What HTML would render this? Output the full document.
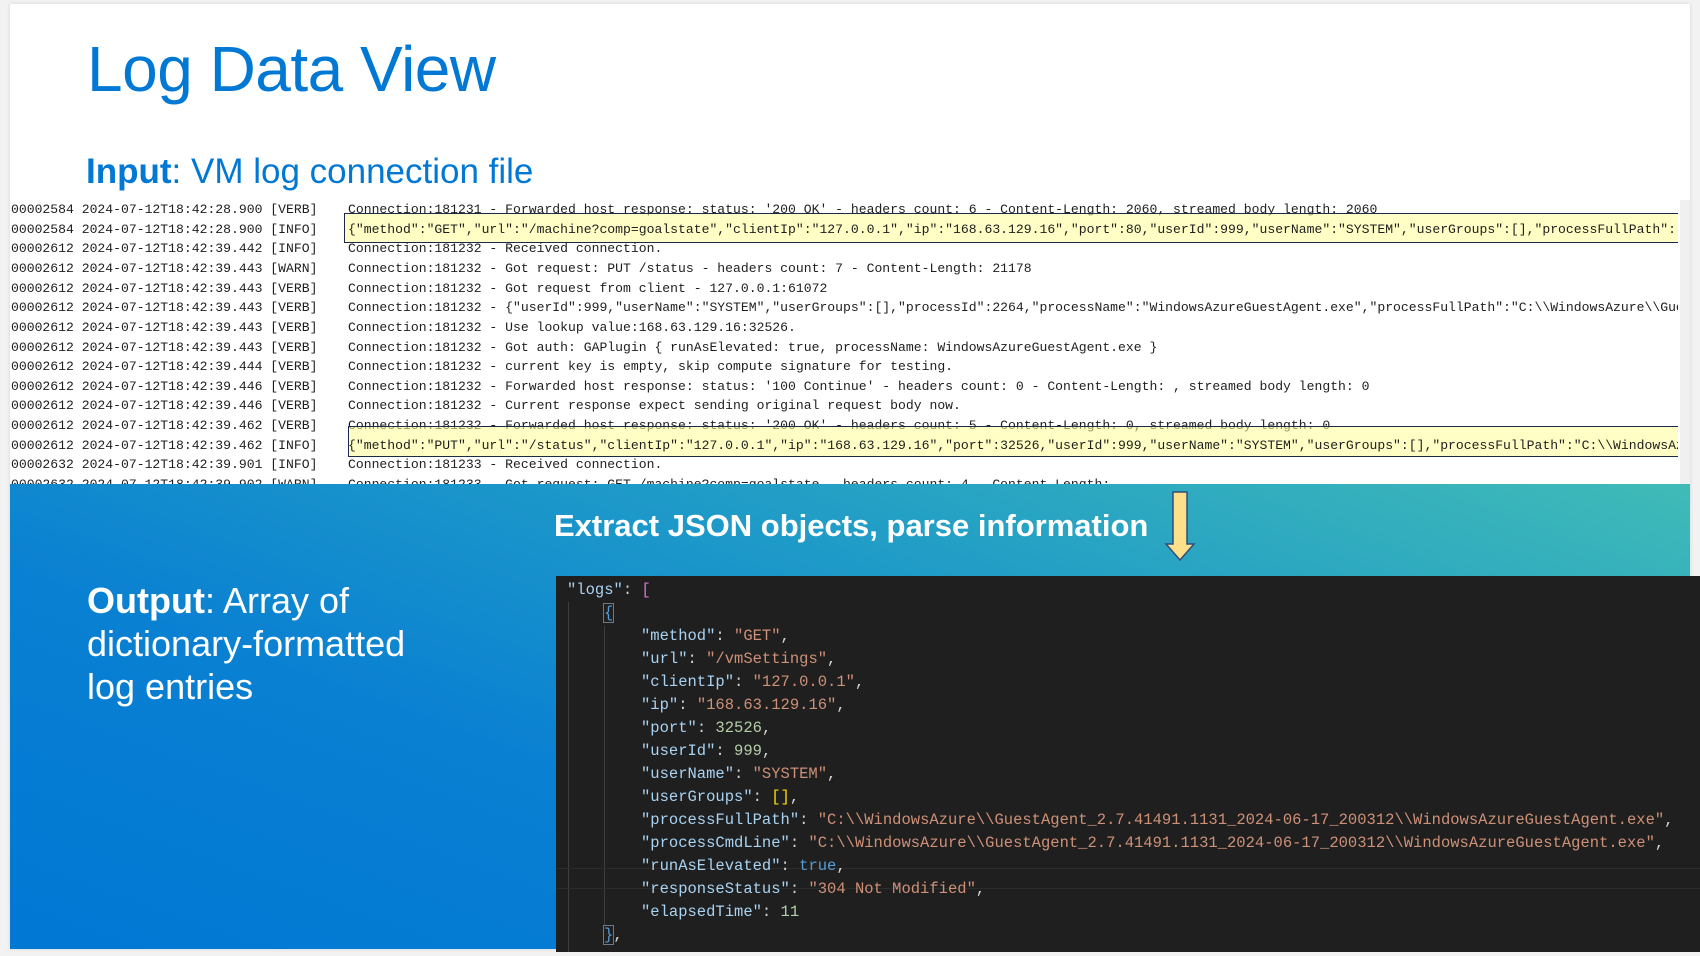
<!DOCTYPE html>
<html><head><meta charset="utf-8">
<style>
*{margin:0;padding:0;box-sizing:border-box}
html,body{width:1700px;height:956px;overflow:hidden;background:#f2f2f2;position:relative;font-family:"Liberation Sans",sans-serif}
#slide{position:absolute;left:10px;top:4px;width:1680px;height:945px;background:#fff;box-shadow:0 0 4px rgba(0,0,0,.12)}
.abs{position:absolute}
#title{left:87px;top:32px;font-size:64px;color:#0078d4;white-space:nowrap;letter-spacing:-0.5px}
#input{left:86px;top:152px;font-size:35px;color:#0078d4;white-space:nowrap}
#logs{left:0;top:200px;width:1678px;height:284px;overflow:hidden}
.ln{position:absolute;left:0;height:20px;line-height:20px;font-family:"Liberation Mono",monospace;font-size:13.1px;color:#1e1e1e;white-space:pre}
.ln span{position:absolute;left:348px}
.hl{position:absolute;background:rgba(255,255,150,.55);border:1.5px solid #1b2a4a}
#sb{left:1680px;top:200px;width:10px;height:284px;background:#f0f0f0}
#band{left:10px;top:484px;width:1680px;height:465px;background:linear-gradient(200deg,#40bbb7 0%,#1f9bc8 35%,#0a80d2 65%,#0078d4 100%)}
#extract{left:554px;top:508px;font-size:31px;font-weight:bold;color:#fff;white-space:nowrap;letter-spacing:0px}
#output{left:87px;top:579px;font-size:36px;line-height:43px;color:#fff}
#code{left:556px;top:576px;width:1144px;height:376px;background:#1f1f1f;overflow:hidden}
.cl{position:absolute;left:0;height:23px;line-height:23px;font-family:"Liberation Mono",monospace;font-size:15.5px;color:#d4d4d4;white-space:pre}
.k{color:#a9d3f2}.s{color:#ce9178}.n{color:#b5cea8}.b{color:#569cd6}.p{color:#da70d6}.y{color:#ffd700}
.guide{position:absolute;width:1px;background:#3e3e3e}
</style></head><body>
<div id="slide"></div>
<div class="abs" id="title">Log Data View</div>
<div class="abs" id="input"><b>Input</b>: VM log connection file</div>

<div class="abs" id="logs">
<div class="ln" style="left:11px;top:-20px">00002584 2024-07-12T18:42:28.900 [VERB]<span>Connection:181231 - Got request: GET /machine?comp=goalstate - headers count: 4</span></div>
<div class="ln" style="left:11px;top:0px">00002584 2024-07-12T18:42:28.900 [VERB]<span style="left:337px">Connection:181231 - Forwarded host response: status: '200 OK' - headers count: 6 - Content-Length: 2060, streamed body length: 2060</span></div>
<div class="hl" style="left:344px;top:13px;width:1348px;height:30px"></div>
<div class="ln" style="left:11px;top:19.6px">00002584 2024-07-12T18:42:28.900 [INFO]<span style="left:337px">{"method":"GET","url":"/machine?comp=goalstate","clientIp":"127.0.0.1","ip":"168.63.129.16","port":80,"userId":999,"userName":"SYSTEM","userGroups":[],"processFullPath":'</span></div>
<div class="ln" style="left:11px;top:39.3px">00002612 2024-07-12T18:42:39.442 [INFO]<span style="left:337px">Connection:181232 - Received connection.</span></div>
<div class="ln" style="left:11px;top:58.9px">00002612 2024-07-12T18:42:39.443 [WARN]<span style="left:337px">Connection:181232 - Got request: PUT /status - headers count: 7 - Content-Length: 21178</span></div>
<div class="ln" style="left:11px;top:78.6px">00002612 2024-07-12T18:42:39.443 [VERB]<span style="left:337px">Connection:181232 - Got request from client - 127.0.0.1:61072</span></div>
<div class="ln" style="left:11px;top:98.2px">00002612 2024-07-12T18:42:39.443 [VERB]<span style="left:337px">Connection:181232 - {"userId":999,"userName":"SYSTEM","userGroups":[],"processId":2264,"processName":"WindowsAzureGuestAgent.exe","processFullPath":"C:\\WindowsAzure\\GuestAgent</span></div>
<div class="ln" style="left:11px;top:117.8px">00002612 2024-07-12T18:42:39.443 [VERB]<span style="left:337px">Connection:181232 - Use lookup value:168.63.129.16:32526.</span></div>
<div class="ln" style="left:11px;top:137.5px">00002612 2024-07-12T18:42:39.443 [VERB]<span style="left:337px">Connection:181232 - Got auth: GAPlugin { runAsElevated: true, processName: WindowsAzureGuestAgent.exe }</span></div>
<div class="ln" style="left:11px;top:157.1px">00002612 2024-07-12T18:42:39.444 [VERB]<span style="left:337px">Connection:181232 - current key is empty, skip compute signature for testing.</span></div>
<div class="ln" style="left:11px;top:176.8px">00002612 2024-07-12T18:42:39.446 [VERB]<span style="left:337px">Connection:181232 - Forwarded host response: status: '100 Continue' - headers count: 0 - Content-Length: , streamed body length: 0</span></div>
<div class="ln" style="left:11px;top:196.4px">00002612 2024-07-12T18:42:39.446 [VERB]<span style="left:337px">Connection:181232 - Current response expect sending original request body now.</span></div>
<div class="ln" style="left:11px;top:216px">00002612 2024-07-12T18:42:39.462 [VERB]<span style="left:337px">Connection:181232 - Forwarded host response: status: '200 OK' - headers count: 5 - Content-Length: 0, streamed body length: 0</span></div>
<div class="hl" style="left:348px;top:226px;width:1344px;height:31px"></div>
<div class="ln" style="left:11px;top:235.7px">00002612 2024-07-12T18:42:39.462 [INFO]<span style="left:337px">{"method":"PUT","url":"/status","clientIp":"127.0.0.1","ip":"168.63.129.16","port":32526,"userId":999,"userName":"SYSTEM","userGroups":[],"processFullPath":"C:\\WindowsAzure</span></div>
<div class="ln" style="left:11px;top:255.3px">00002632 2024-07-12T18:42:39.901 [INFO]<span style="left:337px">Connection:181233 - Received connection.</span></div>
<div class="ln" style="left:11px;top:275px">00002632 2024-07-12T18:42:39.902 [WARN]<span style="left:337px">Connection:181233 - Got request: GET /machine?comp=goalstate - headers count: 4 - Content-Length:</span></div>
</div>
<div class="abs" id="sb"></div>

<div class="abs" id="band"></div>
<div class="abs" id="extract">Extract JSON objects, parse information</div>
<svg class="abs" style="left:1164px;top:490px" width="32" height="72" viewBox="0 0 32 72">
<path d="M9 2 H23 V54 H30 L16 70 L2 54 H9 Z" fill="#ffe08a" stroke="#2f4f7a" stroke-width="1.5"/>
</svg>
<div class="abs" id="output"><b>Output</b>: Array of<br>dictionary-formatted<br>log entries</div>

<div class="abs" id="code">
<div class="guide" style="left:12px;top:26px;height:350px"></div>
<div class="guide" style="left:48px;top:50px;height:300px"></div>
<div style="position:absolute;left:0;top:292px;width:1144px;height:21px;border-top:1px solid #2c2c2c;border-bottom:1px solid #2c2c2c"></div>
<div class="cl" style="left:11px;top:3px"><span class="k">"logs"</span>: <span class="p">[</span></div>
<div class="cl" style="left:48px;top:26px"><span class="b" style="outline:1px solid #6a7a8a">{</span></div>
<div class="cl" style="left:85px;top:49px"><span class="k">"method"</span>: <span class="s">"GET"</span>,</div>
<div class="cl" style="left:85px;top:72px"><span class="k">"url"</span>: <span class="s">"/vmSettings"</span>,</div>
<div class="cl" style="left:85px;top:95px"><span class="k">"clientIp"</span>: <span class="s">"127.0.0.1"</span>,</div>
<div class="cl" style="left:85px;top:118px"><span class="k">"ip"</span>: <span class="s">"168.63.129.16"</span>,</div>
<div class="cl" style="left:85px;top:141px"><span class="k">"port"</span>: <span class="n">32526</span>,</div>
<div class="cl" style="left:85px;top:164px"><span class="k">"userId"</span>: <span class="n">999</span>,</div>
<div class="cl" style="left:85px;top:187px"><span class="k">"userName"</span>: <span class="s">"SYSTEM"</span>,</div>
<div class="cl" style="left:85px;top:210px"><span class="k">"userGroups"</span>: <span class="y">[]</span>,</div>
<div class="cl" style="left:85px;top:233px"><span class="k">"processFullPath"</span>: <span class="s">"C:\\WindowsAzure\\GuestAgent_2.7.41491.1131_2024-06-17_200312\\WindowsAzureGuestAgent.exe"</span>,</div>
<div class="cl" style="left:85px;top:256px"><span class="k">"processCmdLine"</span>: <span class="s">"C:\\WindowsAzure\\GuestAgent_2.7.41491.1131_2024-06-17_200312\\WindowsAzureGuestAgent.exe"</span>,</div>
<div class="cl" style="left:85px;top:279px"><span class="k">"runAsElevated"</span>: <span class="b">true</span>,</div>
<div class="cl" style="left:85px;top:302px"><span class="k">"responseStatus"</span>: <span class="s">"304 Not Modified"</span>,</div>
<div class="cl" style="left:85px;top:325px"><span class="k">"elapsedTime"</span>: <span class="n">11</span></div>
<div class="cl" style="left:48px;top:348px"><span class="b" style="outline:1px solid #6a7a8a">}</span>,</div>
</div>
</body></html>
